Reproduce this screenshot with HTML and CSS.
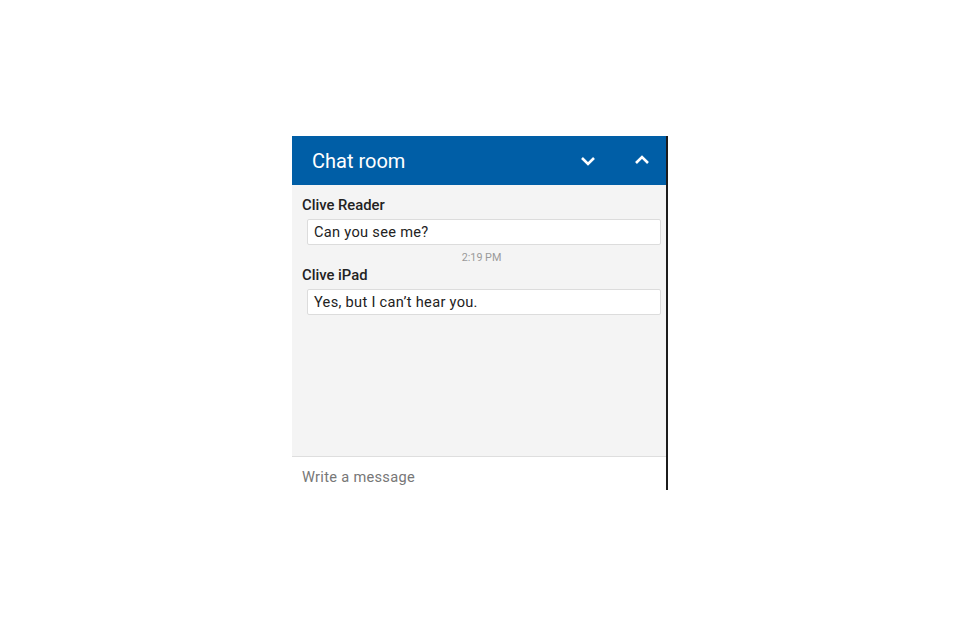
FILE: index.html
```html
<!DOCTYPE html>
<html lang="en">

<head>
    <meta charset="UTF-8">
    <meta name="viewport" content="width=device-width, initial-scale=1.0">
    <title>Chat room</title>
    <link rel="stylesheet" href="styles.css">
</head>

<body>
    <div class="chat">
        <div class="chat-header">
            <span class="chat-title">Chat room</span>
            <div class="chat-actions">
                <span class="chat-btn">
                    <svg width="16" height="10" viewBox="0 0 16 10"><path d="M2 2 L8 8 L14 2" fill="none" stroke="#fff" stroke-width="2.6"/></svg>
                </span>
                <span class="chat-btn">
                    <svg width="16" height="10" viewBox="0 0 16 10"><path d="M2 8 L8 2 L14 8" fill="none" stroke="#fff" stroke-width="2.6"/></svg>
                </span>
            </div>
        </div>
        <div class="chat-body">
            <div class="chat-name">Clive Reader</div>
            <div class="chat-msg">Can you see me?</div>
            <div class="chat-time">2:19 PM</div>
            <div class="chat-name">Clive iPad</div>
            <div class="chat-msg">Yes, but I can’t hear you.</div>
        </div>
        <div class="chat-input">Write a message</div>
    </div>
</body>

</html>
```

FILE: styles.css
```css
* {
    padding: 0;
    margin: 0;
    box-sizing: border-box;
}

body {
    background: #fff;
    font-family: Roboto, "Liberation Sans", sans-serif;
}

.chat {
    width: 376px;
    margin: 136px 0 0 292px;
    border-right: 2px solid #1c1c1c;
    display: flex;
    flex-direction: column;
}

.chat-header {
    height: 49px;
    background: #005ea6;
    display: flex;
    align-items: center;
    justify-content: space-between;
    padding: 0 16px 0 20px;
}

.chat-title {
    color: #fff;
    font-size: 20px;
}

.chat-actions {
    display: flex;
    gap: 38px;
}

.chat-btn {
    display: flex;
    width: 16px;
    height: 10px;
}

.chat-btn:first-child {
    margin-top: 1px;
}

.chat-body {
    height: 271px;
    background: #f4f4f4;
    padding: 11px 5px 0 10px;
}

.chat-name {
    font-size: 14.8px;
    font-weight: 500;
    color: #222;
    line-height: 18px;
}

.chat-msg {
    margin: 5px 0 0 5px;
    background: #fff;
    border: 1px solid #dcdcdc;
    border-radius: 2px;
    padding: 3px 6px;
    line-height: 18px;
    font-size: 14.6px;
    letter-spacing: 0.3px;
    color: #222;
}

.chat-time {
    margin-top: 6px;
    text-align: center;
    font-size: 10.8px;
    color: #9a9a9a;
    line-height: 14px;
}

.chat-time + .chat-name {
    margin-top: 1px;
}

.chat-input {
    height: 34px;
    border-top: 1px solid #dedede;
    background: #fff;
    padding: 11px 10px 0;
    font-size: 14.6px;
    letter-spacing: 0.3px;
    color: #777;
}
```
